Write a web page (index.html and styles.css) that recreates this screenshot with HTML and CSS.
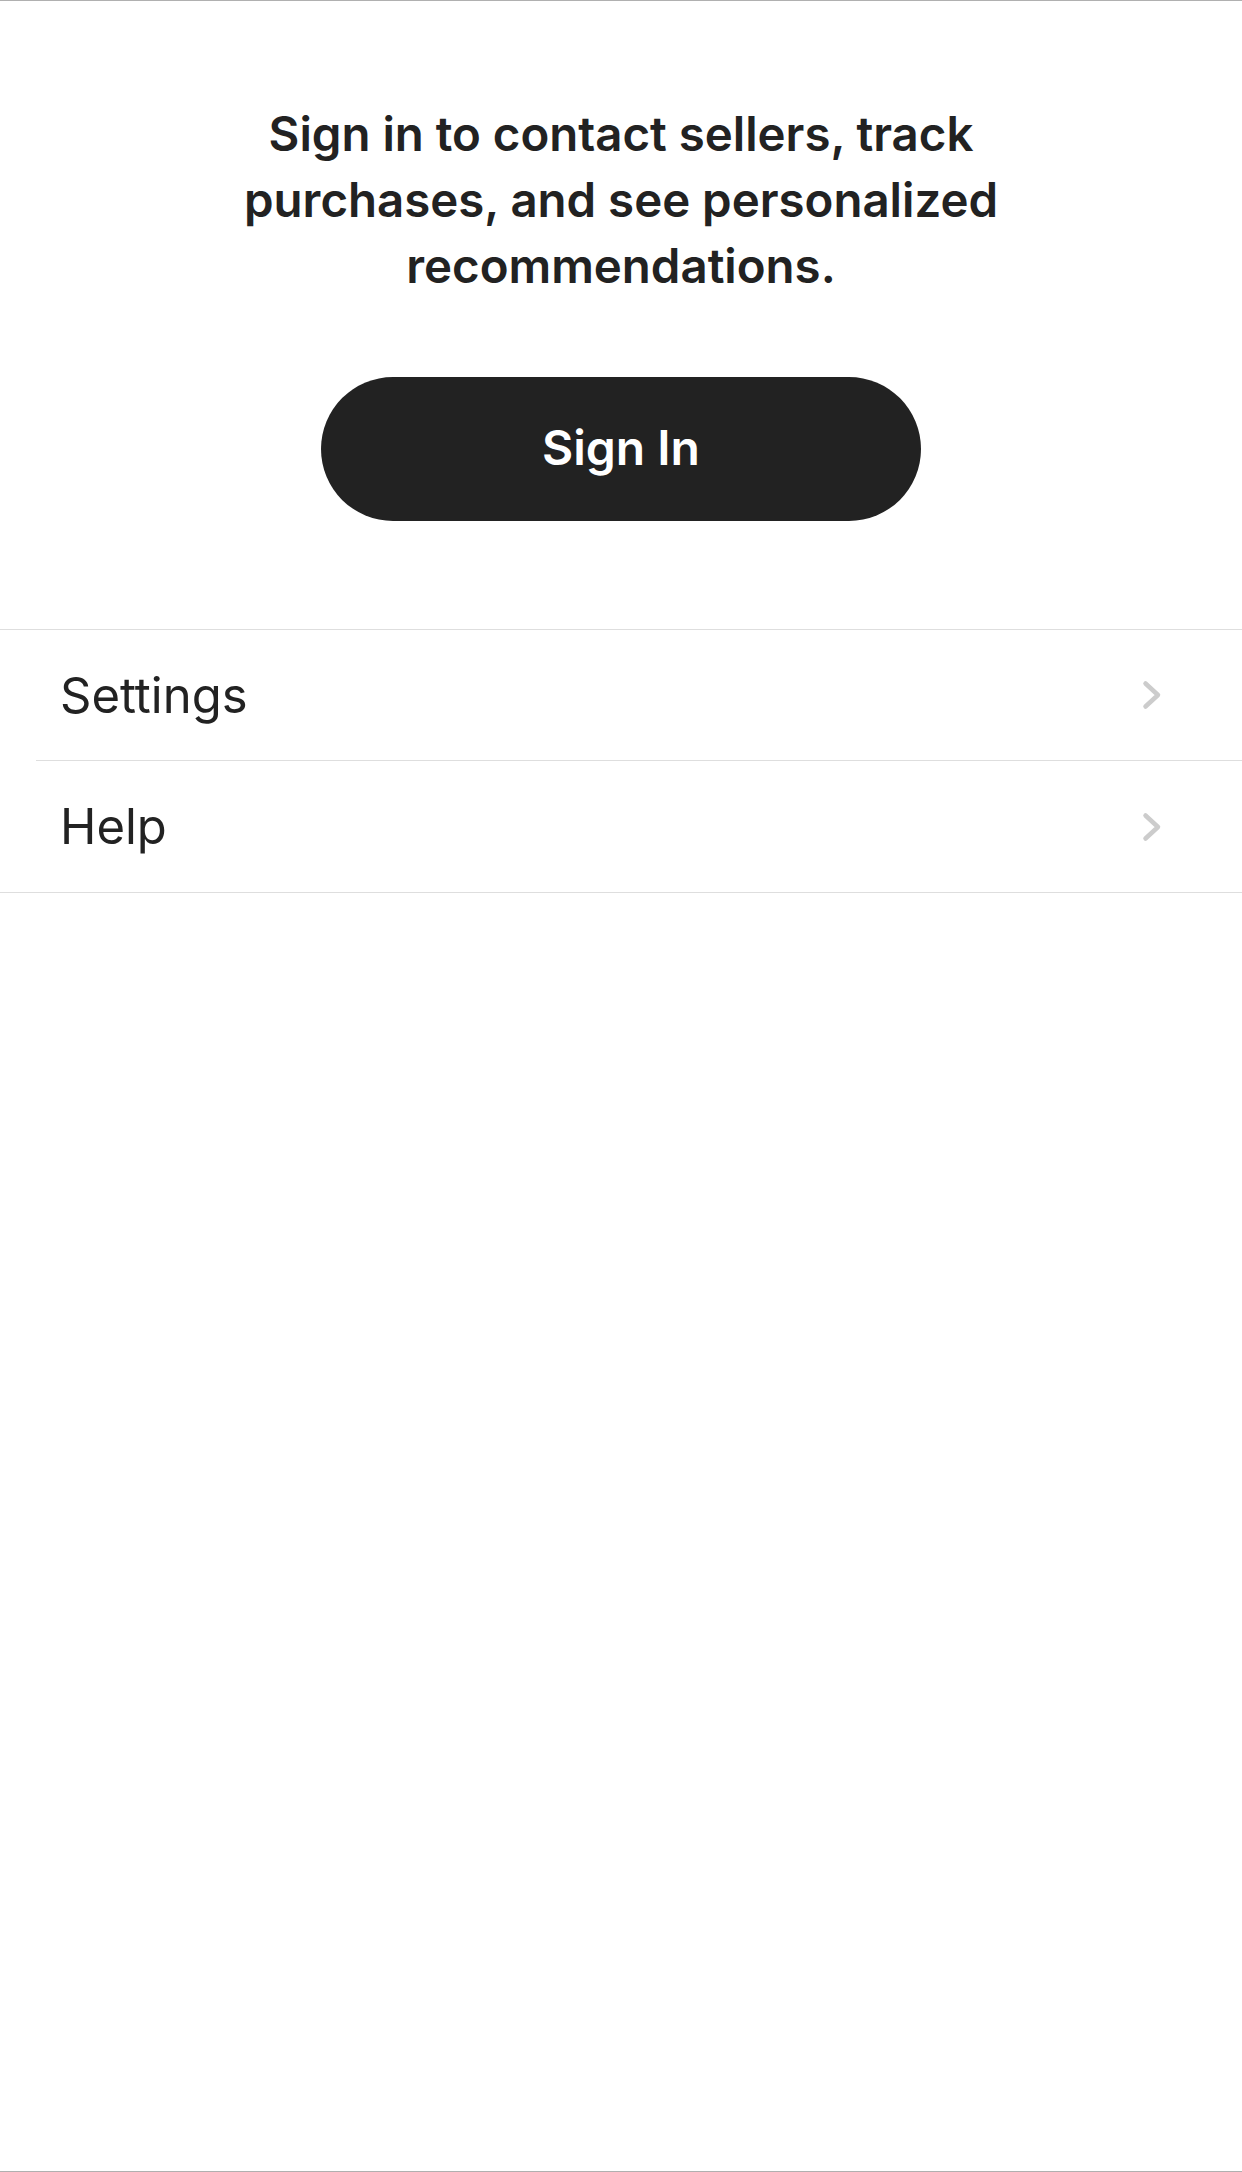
FILE: index.html
```html
<!DOCTYPE html>
<html lang="en">
<head>
<meta charset="utf-8">
<title>Sign in</title>
<link rel="stylesheet" href="styles.css">
</head>
<body>
<div class="screen">
  <section class="intro">
    <p class="intro-text">Sign in to contact sellers, track<br>purchases, and see personalized<br>recommendations.</p>
    <button class="signin-btn" type="button">Sign In</button>
  </section>
  <nav class="menu">
    <a class="menu-row" href="#">
      <span class="menu-label">Settings</span>
      <svg class="chev" width="20" height="30" viewBox="0 0 20 30" aria-hidden="true"><polyline points="3.5,3.5 16,15 3.5,26.5" fill="none" stroke="#cccccc" stroke-width="4.5" stroke-linecap="round" stroke-linejoin="round"/></svg>
    </a>
    <a class="menu-row" href="#">
      <span class="menu-label">Help</span>
      <svg class="chev" width="20" height="30" viewBox="0 0 20 30" aria-hidden="true"><polyline points="3.5,3.5 16,15 3.5,26.5" fill="none" stroke="#cccccc" stroke-width="4.5" stroke-linecap="round" stroke-linejoin="round"/></svg>
    </a>
  </nav>
</div>
</body>
</html>
```
FILE: styles.css
```css
* { box-sizing: border-box; }
html, body { margin: 0; padding: 0; background: #ffffff; }
body {
  font-family: Inter, "Noto Sans", "Liberation Sans", sans-serif;
  color: #222222;
}
.screen {
  min-height: 2172px;
  border-top: 1px solid #b0b0b0;
  border-bottom: 1px solid #b0b0b0;
  background: #ffffff;
}
.intro {
  display: flex;
  flex-direction: column;
  align-items: center;
  padding: 100px 0 108px;
}
.intro-text {
  margin: 0;
  text-align: center;
  font-size: 47.4px;
  line-height: 66px;
  font-weight: 600;
}
.signin-btn {
  margin-top: 78px;
  width: 600px;
  height: 144px;
  border: 0;
  border-radius: 72px;
  background: #222222;
  color: #ffffff;
  font-family: inherit;
  font-size: 48px;
  font-weight: 600;
  padding: 0 0 4px;
}
.menu {
  border-top: 1px solid #dedede;
  border-bottom: 1px solid #dedede;
}
.menu-row {
  display: flex;
  align-items: center;
  justify-content: space-between;
  height: 130px;
  margin-left: 36px;
  padding: 0 80px 0 24px;
  color: #222222;
  text-decoration: none;
}
.menu-row + .menu-row {
  border-top: 1px solid #dedede;
  height: 132px;
}
.menu-label {
  font-size: 49px;
  font-weight: 400;
}
.chev { display: block; }
```
